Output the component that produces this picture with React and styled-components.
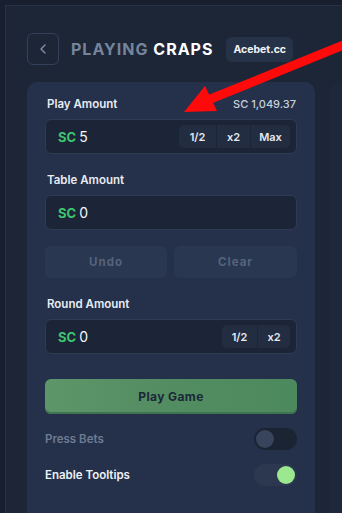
import styled, { createGlobalStyle } from 'styled-components'
import { ChevronLeft } from 'lucide-react'

const GlobalStyle = createGlobalStyle`
  html, body {
    margin: 0;
    padding: 0;
    background: #171f2c;
    font-family: Inter, "Noto Sans", sans-serif;
    -webkit-font-smoothing: antialiased;
  }
  * { box-sizing: border-box; }
`

const Page = styled.div`
  position: relative;
  width: 342px;
  height: 513px;
  overflow: hidden;
  padding: 5px 0 0 5px;
  background: #182030;
`

const Main = styled.div`
  height: 100%;
  background: #1c2637;
  border-top: 1px solid #263146;
  border-left: 1px solid #263146;
  padding: 27px 0 0 21px;
  display: flex;
  flex-direction: column;
`

const Header = styled.div`
  display: flex;
  align-items: center;
  height: 32px;
  margin-bottom: 17px;
`

const BackButton = styled.button`
  width: 32px;
  height: 32px;
  display: flex;
  align-items: center;
  justify-content: center;
  background: transparent;
  border: 1px solid #34415a;
  border-radius: 6px;
  color: #8391a8;
  padding: 0;
  margin-right: 12px;
`

const Title = styled.h1`
  margin: 0;
  font-size: 16px;
  font-weight: 700;
  letter-spacing: 1px;
  color: #ffffff;
  span { color: #76849b; }
`

const Badge = styled.div`
  margin-left: 13px;
  height: 25px;
  padding: 0 7px;
  display: flex;
  align-items: center;
  background: #263247;
  border-radius: 6px;
  color: #f2f4f8;
  font-size: 10.5px;
  font-weight: 700;
`

const Columns = styled.div`
  display: flex;
  gap: 15px;
  flex: 1;
`

const Panel = styled.div`
  width: 288px;
  flex-shrink: 0;
  background: #25314a;
  border-radius: 10px 10px 0 0;
  padding: 15px 18px 0;
  display: flex;
  flex-direction: column;
`

const SidePanel = styled.div`
  flex: 1;
  background: #1e283a;
  border-radius: 10px 0 0 0;
`

const LabelRow = styled.div`
  display: flex;
  justify-content: space-between;
  align-items: center;
  height: 14px;
  margin: ${p => p.$top || 0}px 1px 8px 2px;
  font-size: 11.5px;
  font-weight: 600;
  color: #e8ecf2;
  em {
    font-style: normal;
    font-weight: 500;
    font-size: 11px;
    color: #c9d0db;
  }
`

const InputBox = styled.div`
  height: 35px;
  display: flex;
  align-items: center;
  padding: 0 6px 0 12px;
  background: #1c2537;
  border: 1px solid #2f3b53;
  border-radius: 6px;
`

const Currency = styled.span`
  color: #3fc36f;
  font-size: 13px;
  font-weight: 700;
  margin-right: 3px;
`

const Value = styled.span`
  color: #f4f6fa;
  font-size: 14px;
  flex: 1;
`

const Group = styled.div`
  display: flex;
  height: 23px;
  background: #222d41;
  border-radius: 5px;
  overflow: hidden;
`

const GroupButton = styled.button`
  width: ${p => p.$w}px;
  border: none;
  background: transparent;
  color: #e6eaf0;
  font-family: inherit;
  font-size: 11px;
  font-weight: 600;
  padding: 0;
  & + & { border-left: 1px solid #1c2537; }
`

const ActionRow = styled.div`
  display: flex;
  gap: 7px;
  margin-top: 16px;
`

const ActionButton = styled.button`
  flex: ${p => p.$grow};
  height: 32px;
  border: none;
  border-radius: 6px;
  background: #2a3751;
  color: #56637b;
  font-family: inherit;
  font-size: 11.5px;
  font-weight: 700;
  letter-spacing: 1px;
`

const PlayButton = styled.button`
  margin-top: 25px;
  height: 35px;
  border: none;
  border-radius: 6px;
  background: linear-gradient(90deg, #5d9669 0%, #548e62 40%, #4c895c 100%);
  box-shadow: inset 0 -2px 0 #3f7450;
  color: #1b2838;
  font-family: inherit;
  font-size: 12px;
  font-weight: 700;
  letter-spacing: 0.4px;
`

const ToggleRow = styled.div`
  display: flex;
  justify-content: space-between;
  align-items: center;
  height: 22px;
  margin-top: ${p => p.$top}px;
  font-size: 11.5px;
  font-weight: 600;
  color: ${p => (p.$muted ? '#6e7b93' : '#eef1f6')};
`

const Toggle = styled.div`
  width: 43px;
  height: 22px;
  border-radius: 11px;
  padding: 2px;
  display: flex;
  justify-content: ${p => (p.$on ? 'flex-end' : 'flex-start')};
  background: ${p => (p.$on ? '#2b3850' : '#1b2433')};
  &::after {
    content: '';
    width: 18px;
    height: 18px;
    border-radius: 50%;
    background: ${p => (p.$on ? '#9be88f' : '#37445c')};
  }
`

const Arrow = styled.svg`
  position: absolute;
  left: 0;
  top: 0;
  pointer-events: none;
`

const AmountField = ({ label, right, value, buttons, top }) => (
  <>
    <LabelRow $top={top}>
      <span>{label}</span>
      {right && <em>{right}</em>}
    </LabelRow>
    <InputBox>
      <Currency>SC</Currency>
      <Value>{value}</Value>
      {buttons && (
        <Group>
          {buttons.map(([text, w]) => (
            <GroupButton key={text} $w={w}>{text}</GroupButton>
          ))}
        </Group>
      )}
    </InputBox>
  </>
)

export default function App() {
  return (
    <>
      <GlobalStyle />
      <Page>
        <Main>
          <Header>
            <BackButton><ChevronLeft size={16} strokeWidth={2} /></BackButton>
            <Title><span>PLAYING</span> CRAPS</Title>
            <Badge>Acebet.cc</Badge>
          </Header>
          <Columns>
            <Panel>
              <AmountField
                label="Play Amount"
                right="SC 1,049.37"
                value="5"
                buttons={[['1/2', 37], ['x2', 34], ['Max', 40]]}
              />
              <AmountField label="Table Amount" value="0" top={19} />
              <ActionRow>
                <ActionButton $grow={122}>Undo</ActionButton>
                <ActionButton $grow={123}>Clear</ActionButton>
              </ActionRow>
              <AmountField
                label="Round Amount"
                value="0"
                top={19}
                buttons={[['1/2', 35], ['x2', 33]]}
              />
              <PlayButton>Play Game</PlayButton>
              <ToggleRow $muted $top={14}>
                <span>Press Bets</span>
                <Toggle />
              </ToggleRow>
              <ToggleRow $top={14}>
                <span>Enable Tooltips</span>
                <Toggle $on />
              </ToggleRow>
            </Panel>
            <SidePanel />
          </Columns>
        </Main>
        <Arrow width="342" height="513" viewBox="0 0 342 513">
          <line x1="346" y1="44" x2="208" y2="100" stroke="#ff0a0a" strokeWidth="9" />
          <polygon points="184,112 205,86 217,111" fill="#ff0a0a" />
        </Arrow>
      </Page>
    </>
  )
}
